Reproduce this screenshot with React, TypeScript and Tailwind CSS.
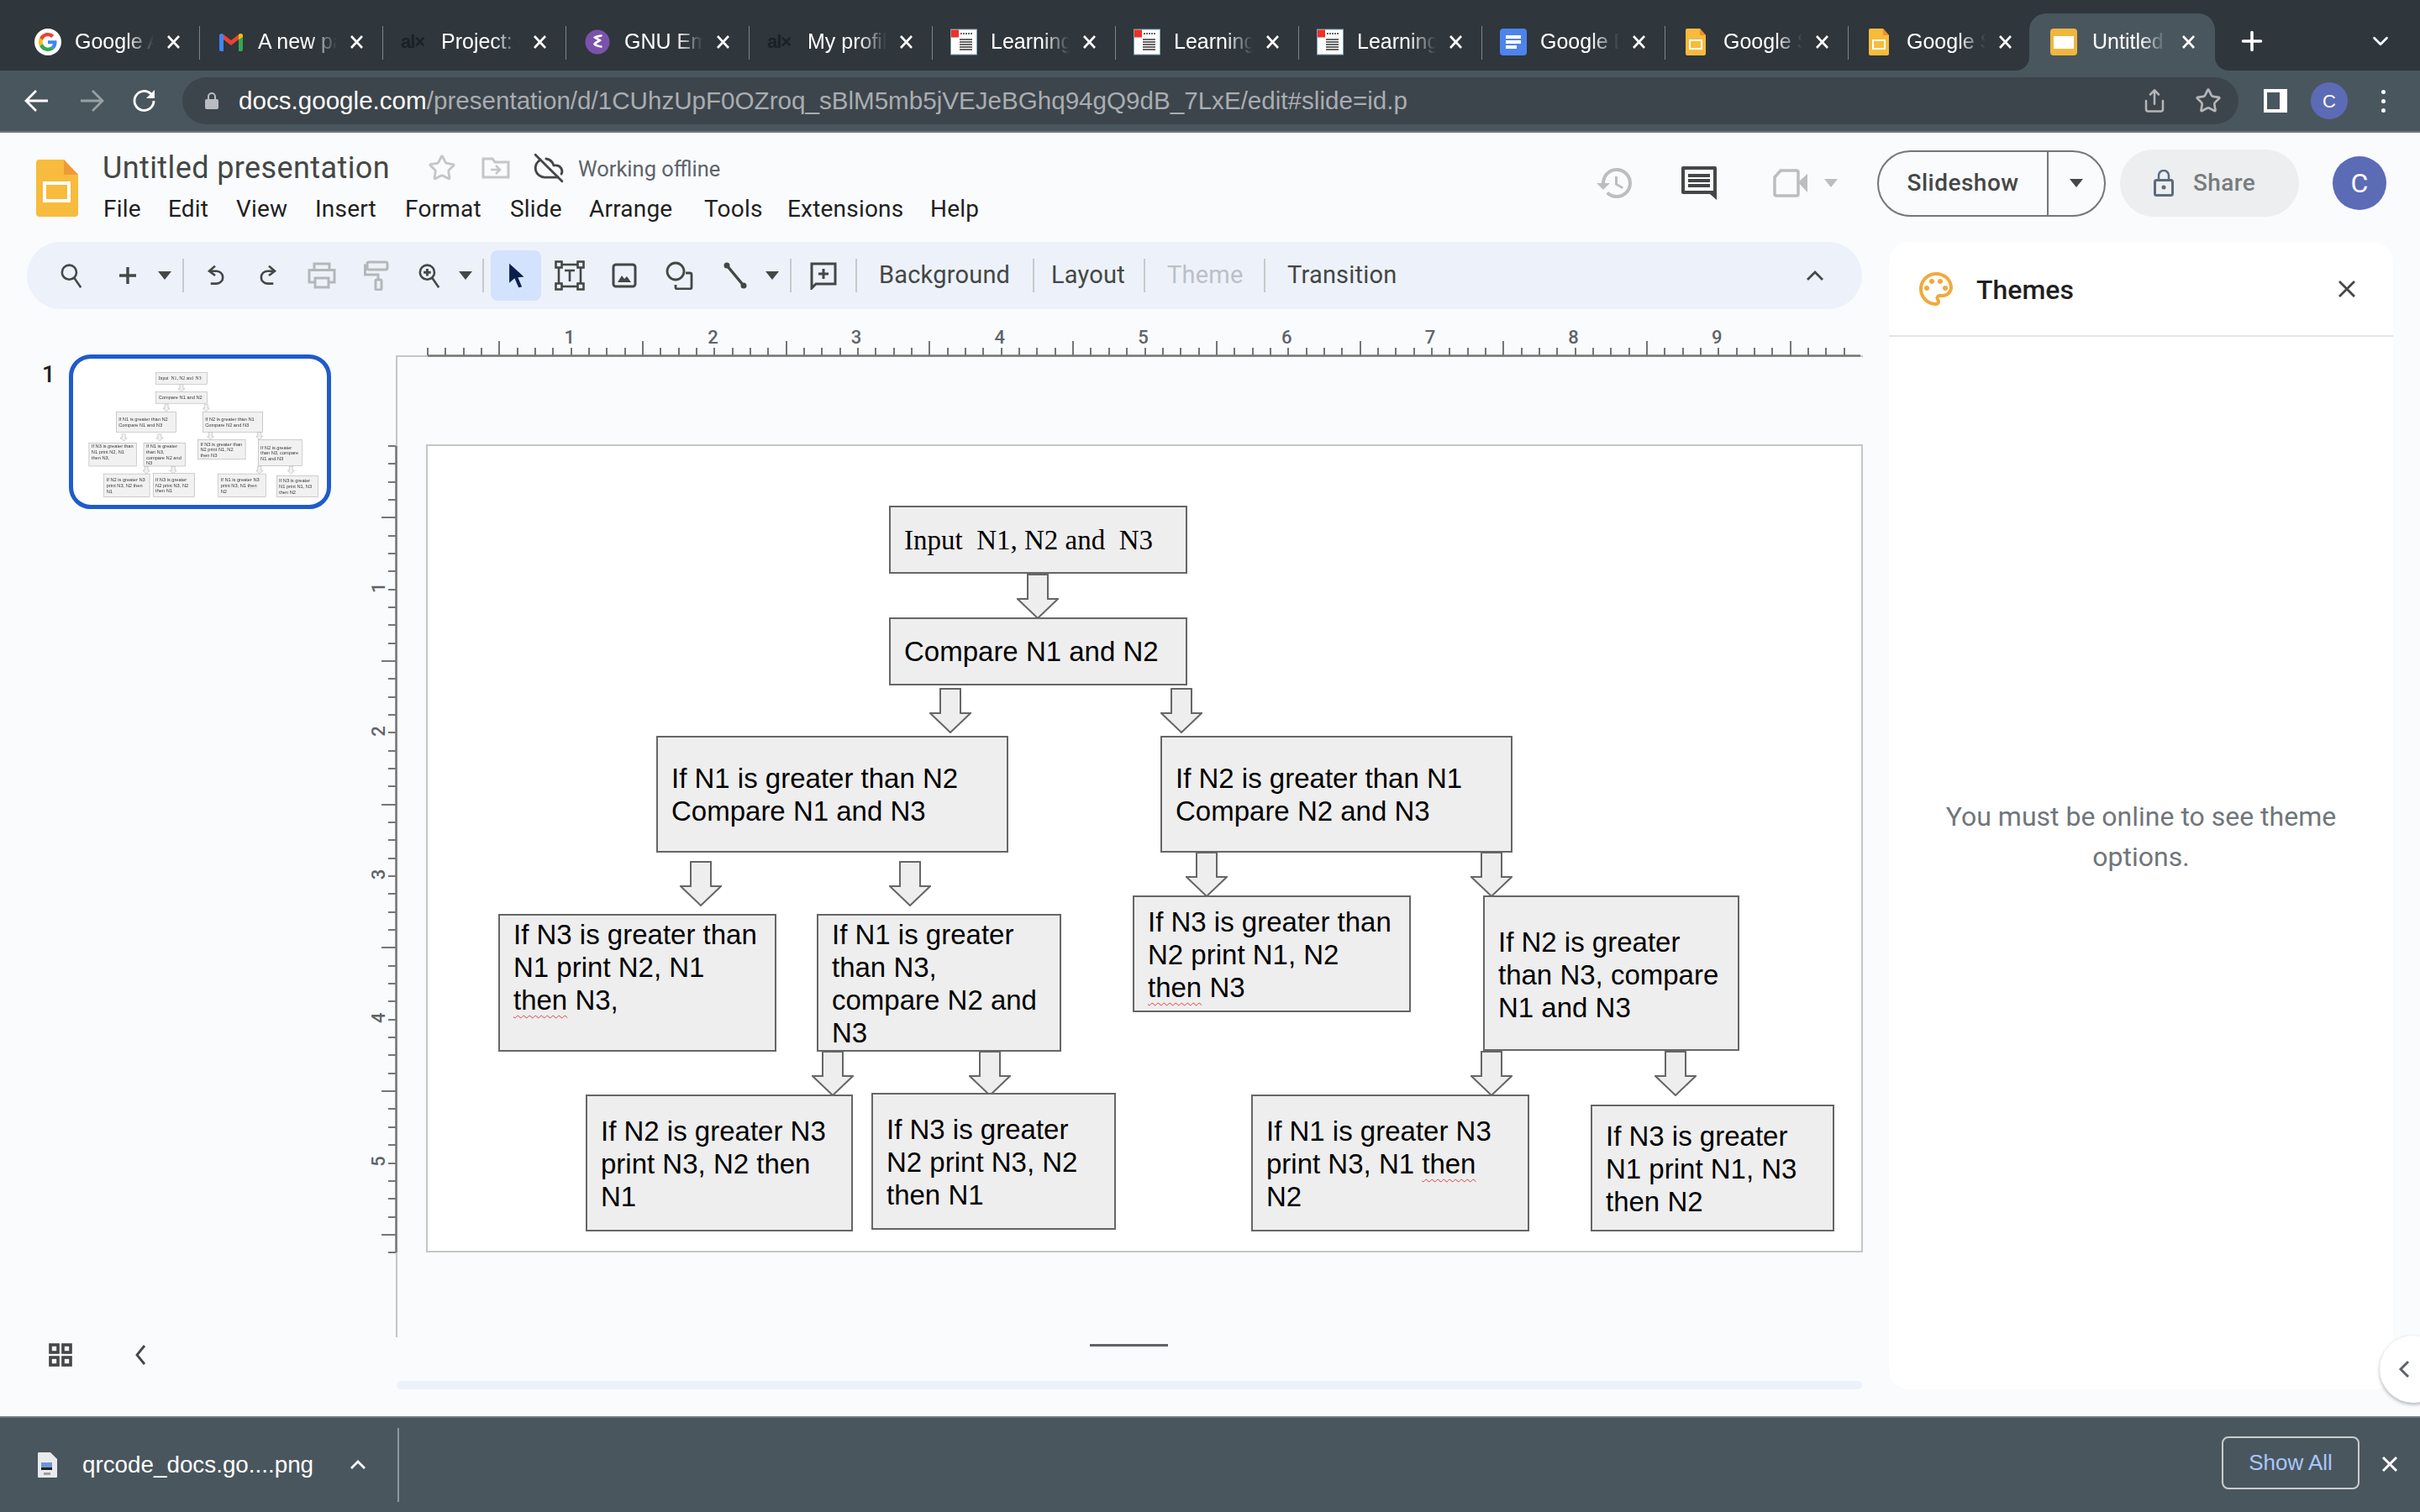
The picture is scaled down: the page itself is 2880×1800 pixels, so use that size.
import React from "react";
import { ChevronDown, CloudOff, Plus, Share, Star } from "lucide-react";

const ui = "font-['Roboto',sans-serif]";
const chrome = "font-['Liberation_Sans',sans-serif]";

function GoogleG() {
  return (
    <span className="w-8 h-8 rounded-full bg-white flex items-center justify-center">
      <svg width="22" height="22" viewBox="0 0 48 48">
        <path fill="#EA4335" d="M24 9.5c3.54 0 6.71 1.22 9.21 3.6l6.85-6.85C35.9 2.38 30.47 0 24 0 14.62 0 6.51 5.38 2.56 13.22l7.98 6.19C12.43 13.72 17.74 9.5 24 9.5z" />
        <path fill="#4285F4" d="M46.98 24.55c0-1.57-.15-3.09-.38-4.55H24v9.02h12.94c-.58 2.96-2.26 5.48-4.78 7.18l7.73 6c4.51-4.18 7.09-10.36 7.09-17.65z" />
        <path fill="#FBBC05" d="M10.53 28.59c-.48-1.45-.76-2.99-.76-4.59s.27-3.14.76-4.59l-7.98-6.19C.92 16.46 0 20.12 0 24c0 3.88.92 7.54 2.56 10.78l7.97-6.19z" />
        <path fill="#34A853" d="M24 48c6.48 0 11.93-2.13 15.89-5.81l-7.73-6c-2.15 1.45-4.92 2.3-8.16 2.3-6.26 0-11.57-4.22-13.47-9.91l-7.98 6.19C6.51 42.62 14.62 48 24 48z" />
      </svg>
    </span>
  );
}
function Gmail() {
  return (
    <svg width="32" height="32" viewBox="0 0 32 32">
      <path fill="#4285F4" d="M2 8.5C2 7 3 6 4.500 6c.8 0 1.500.4 2.500 1v20H4a2 2 0 0 1-2-2z" />
      <path fill="#34A853" d="M25 7c1-.6 1.700-1 2.500-1C29 6 30 7 30 8.500V25a2 2 0 0 1-2 2h-3z" />
      <path fill="#EA4335" d="M7 7l9 7 9-7v6l-9 7-9-7z" />
      <path fill="#FBBC05" d="M25 7c1-.6 1.700-1 2.500-1C29 6 30 7 30 8.500V10l-5 3z" />
    </svg>
  );
}
function Alx() {
  return <span className="w-8 text-[22px] leading-none font-bold font-['Liberation_Sans',sans-serif] text-[#1b2126] tracking-[-1px]">al×</span>;
}
function Emacs() {
  return (
    <svg width="32" height="32" viewBox="0 0 32 32">
      <circle cx="16" cy="16" r="14.500" fill="#7b52ab" />
      <path d="M20.500 8.500c-3 .5-6 1-7.500 2 1.500 1.500 5 2.500 6 3.500-2 1.500-5.500 2.500-6.500 4.500 1.500 2 5 2.500 8 3" fill="none" stroke="#fff" strokeWidth="2.600" strokeLinecap="round" />
    </svg>
  );
}
function Learning() {
  return (
    <svg width="32" height="32" viewBox="0 0 32 32">
      <rect x="0.500" y="1" width="31" height="30" fill="#fff" stroke="#7fa3b5" />
      <rect x="1" y="1.500" width="9" height="9" fill="#ee3124" />
      <path d="M12 6h14" stroke="#666" strokeWidth="2" strokeDasharray="2 1" />
      <path d="M11 13h15M11 16h15M11 19h15M11 22h15M11 25h15" stroke="#666" strokeWidth="2" />
    </svg>
  );
}
function DocsIcon() {
  return (
    <svg width="32" height="32" viewBox="0 0 32 32">
      <rect width="32" height="32" y="0" rx="4" fill="#4d84ec" />
      <path d="M7 8h18v4H7zM7 14h18v4H7zM7 20h13v4H7z" fill="#fff" />
    </svg>
  );
}
function SlidesSmall() {
  return (
    <svg width="32" height="32" viewBox="0 0 32 32">
      <path d="M5 0h15l7 8v22a2 2 0 0 1-2 2H5a2 2 0 0 1-2-2V2a2 2 0 0 1 2-2z" fill="#f7bb3d" />
      <path d="M20 0l7 8h-7z" fill="#ec8f2f" />
      <path d="M8 14h14v10H8z" fill="#f7bb3d" stroke="#fff" strokeWidth="2" />
    </svg>
  );
}
function SlidesActive() {
  return (
    <svg width="32" height="32" viewBox="0 0 32 32">
      <rect width="32" height="32" rx="4" fill="#efb73e" />
      <rect x="4" y="9" width="24" height="15" fill="#fff" />
    </svg>
  );
}
function TabX() {
  return (
    <svg width="17" height="16" viewBox="0 0 17 16" className="shrink-0">
      <path d="M2 1l13 14M15 1L2 15" stroke="#fff" strokeWidth="2.600" />
    </svg>
  );
}

const tabs: [React.ReactNode, string][] = [
  [<GoogleG />, "Google Accounts"],
  [<Gmail />, "A new password"],
  [<Alx />, "Project: 0x01"],
  [<Emacs />, "GNU Emacs"],
  [<Alx />, "My profile"],
  [<Learning />, "Learning Objects"],
  [<Learning />, "Learning Objects"],
  [<Learning />, "Learning Objects"],
  [<DocsIcon />, "Google Docs"],
  [<SlidesSmall />, "Google Slides"],
  [<SlidesSmall />, "Google Slides"],
];

function TabStrip() {
  return (
    <div className={`h-[84px] bg-[#2f363c] flex pl-[20px] shrink-0 ${chrome}`}>
      {tabs.map(([icon, title], i) => (
        <div key={i} className="w-[218px] h-[68px] mt-[16px] flex items-center pl-[21px] relative shrink-0">
          {icon}
          <span className="ml-[16px] w-[94px] overflow-hidden whitespace-nowrap text-[25px] text-white [mask-image:linear-gradient(90deg,#000_65%,transparent_100%)]">{title}</span>
          <span className="ml-[15px]"><TabX /></span>
          {i < 10 && <span className="absolute right-0 top-[15px] h-[40px] w-[1px] bg-[#7d858b]" />}
        </div>
      ))}
      <div className="-ml-[3px] w-[221px] h-[68px] mt-[16px] bg-[#4a565e] rounded-t-[20px] flex items-center pl-[25px] relative shrink-0">
        <SlidesActive />
        <span className="ml-[18px] w-[88px] overflow-hidden whitespace-nowrap text-[25px] text-white [mask-image:linear-gradient(90deg,#000_65%,transparent_100%)]">Untitled presentation</span>
        <span className="ml-[18px]"><TabX /></span>
        <span className="absolute -left-4 bottom-0 w-4 h-4 bg-[#4a565e]"><span className="block w-4 h-4 bg-[#2f363c] rounded-br-2xl" /></span>
        <span className="absolute -right-4 bottom-0 w-4 h-4 bg-[#4a565e]"><span className="block w-4 h-4 bg-[#2f363c] rounded-bl-2xl" /></span>
      </div>
      <Plus className="ml-[26px] mt-[31px] text-white" size={36} strokeWidth={2.400} />
      <ChevronDown className="ml-[120px] mt-[34px] text-white" size={30} strokeWidth={2.200} />
    </div>
  );
}

function UrlBar() {
  return (
    <div className={`h-[74px] bg-[#4a565e] border-b-2 border-[#6c7a7f] flex items-center shrink-0 ${chrome}`}>
      <svg width="32" height="32" viewBox="0 0 32 32" className="ml-[28px]"><path d="M29 16H4M15 4L3 16l12 12" fill="none" stroke="#fff" strokeWidth="2.800" /></svg>
      <svg width="32" height="32" viewBox="0 0 32 32" className="ml-[33px]"><path d="M3 16h25M17 4l12 12-12 12" fill="none" stroke="#98a0a5" strokeWidth="2.800" /></svg>
      <svg width="32" height="32" viewBox="0 0 32 32" className="ml-[31px]"><path d="M27 16a11.500 11.500 0 1 1-3.400-8.200" fill="none" stroke="#fff" strokeWidth="2.800" /><path d="M28 3v10H18z" fill="#fff" /></svg>
      <div className="ml-[29px] w-[2447px] h-[56px] bg-[#3d454c] rounded-full flex items-center">
        <svg width="18" height="22" viewBox="0 0 18 22" className="ml-[26px]"><path d="M5 9V6a4 4 0 0 1 8 0v3" fill="none" stroke="#b9bcc0" strokeWidth="2" /><rect x="1" y="9" width="16" height="12" rx="2" fill="#b9bcc0" /></svg>
        <span className="ml-[23px] text-[29.600px] whitespace-nowrap text-[#a9adb1]"><span className="text-white">docs.google.com</span>/presentation/d/1CUhzUpF0OZroq_sBlM5mb5jVEJeBGhq94gQ9dB_7LxE/edit#slide=id.p</span>
        <Share className="ml-auto text-[#b4b6b8]" size={30} strokeWidth={2} />
        <Star className="ml-[33px] mr-[20px] text-[#b4b6b8]" size={32} strokeWidth={2} />
      </div>
      <span className="ml-[30px] w-[28px] h-[28px] bg-[#4a565e] border-[4px] border-r-[9px] border-white" />
      <span className="ml-[28px] w-[44px] h-[44px] rounded-full bg-[#5c6bb5] text-white text-[22px] flex items-center justify-center">C</span>
      <span className="ml-[40px] flex flex-col gap-[6px]">
        <span className="w-[5px] h-[5px] rounded-full bg-white" />
        <span className="w-[5px] h-[5px] rounded-full bg-white" />
        <span className="w-[5px] h-[5px] rounded-full bg-white" />
      </span>
    </div>
  );
}

const menu: [string, string][] = [
  ["File", "w-[77px]"], ["Edit", "w-[81px]"], ["View", "w-[94px]"], ["Insert", "w-[107px]"], ["Format", "w-[125px]"],
  ["Slide", "w-[94px]"], ["Arrange", "w-[137px]"], ["Tools", "w-[99px]"], ["Extensions", "w-[170px]"], ["Help", "w-[60px]"],
];

function SlidesLogo() {
  return (
    <svg width="50" height="68" viewBox="0 0 50 68" className="mt-[32px] shrink-0">
      <path d="M4 0h29l17 18v46a4 4 0 0 1-4 4H4a4 4 0 0 1-4-4V4a4 4 0 0 1 4-4z" fill="#f7bb3d" />
      <path d="M33 0l17 18H33z" fill="#f19a35" />
      <rect x="10" y="28" width="29" height="21" fill="#f7bb3d" stroke="#fff" strokeWidth="4" />
    </svg>
  );
}

function Header() {
  return (
    <div className={`h-[130px] flex pl-[43px] pr-[40px] shrink-0 ${ui}`}>
      <SlidesLogo />
      <div className="ml-[29px]">
        <div className="mt-[20px] h-[44px] flex items-center">
          <span className="text-[36px] tracking-[0.4px] text-[#444746] whitespace-nowrap w-[342px]">Untitled presentation</span>
          <Star className="ml-[45px] text-[#c4c7c5]" size={34} strokeWidth={2} />
          <svg width="36" height="30" viewBox="0 0 36 30" className="ml-[29px]"><path d="M3 26V4h11l3 4h16v18z" fill="none" stroke="#c4c7c5" strokeWidth="3" /><path d="M12 17h11M18 12l5 5-5 5" fill="none" stroke="#c4c7c5" strokeWidth="2.500" /></svg>
          <CloudOff className="ml-[26px] text-[#444746]" size={38} strokeWidth={1.800} />
          <span className="ml-[16px] mt-[3px] text-[25.500px] text-[#5f6368] whitespace-nowrap">Working offline</span>
        </div>
        <div className="mt-[5px] ml-[1px] h-[44px] flex items-center">
          {menu.map(([m, w]) => (
            <span key={m} className={`${w} text-[28px] tracking-[0.2px] text-[#1f1f1f] whitespace-nowrap`}>{m}</span>
          ))}
        </div>
      </div>
      <div className="ml-auto mt-[20px] h-[80px] flex items-center">
        <svg width="48" height="48" viewBox="0 0 24 24" fill="#bdbdbd"><path d="M13 3a9 9 0 0 0-9 9H1l3.890 3.890.07.14L9 12H6c0-3.870 3.130-7 7-7s7 3.130 7 7-3.130 7-7 7c-1.930 0-3.680-.79-4.940-2.060l-1.420 1.420A8.954 8.954 0 0 0 13 21a9 9 0 0 0 0-18zm-1 5v5l4.280 2.540.72-1.210-3.500-2.080V8H12z" /></svg>
        <svg width="48" height="48" viewBox="0 0 48 48" className="ml-[52px]"><path d="M5 4h38a2 2 0 0 1 2 2v38l-8-7H5a2 2 0 0 1-2-2V6a2 2 0 0 1 2-2z" fill="#444746" /><rect x="7" y="8" width="34" height="25" fill="#f9fbfd" /><path d="M11 13h26v4H11zM11 19h26v4H11zM11 25h26v4H11z" fill="#444746" /></svg>
        <svg width="44" height="36" viewBox="0 0 44 36" className="ml-[63px]"><path d="M10 3h19a2 2 0 0 1 2 2v26a2 2 0 0 1-2 2H5a2 2 0 0 1-2-2V11z" fill="none" stroke="#bdbdbd" strokeWidth="3.500" /><path d="M31 17l11-10v22z" fill="#bdbdbd" /></svg>
        <svg width="16" height="10" viewBox="0 0 16 10" className="ml-[18px]"><path d="M0 0h16l-8 10z" fill="#bdbdbd" /></svg>
        <div className="ml-[47px] w-[272px] h-[79px] rounded-full border-2 border-[#747775] flex">
          <span className="w-[202px] border-r-2 border-[#747775] flex items-center justify-center text-[28px] font-medium tracking-[0.5px] text-[#444746]">Slideshow</span>
          <span className="flex-1 flex items-center justify-center"><svg width="16" height="10" viewBox="0 0 16 10"><path d="M0 0h16l-8 10z" fill="#444746" /></svg></span>
        </div>
        <div className="ml-[17px] w-[213px] h-[80px] rounded-full bg-[#eceef0] flex items-center pl-[40px]">
          <svg width="24" height="32" viewBox="0 0 24 32"><path d="M6 13V7a6 6 0 0 1 12 0v6" fill="none" stroke="#5c6b7f" strokeWidth="2.500" /><rect x="1.500" y="12.500" width="21" height="18" rx="2" fill="none" stroke="#5c6b7f" strokeWidth="3" /><circle cx="12" cy="21" r="2.500" fill="#5c6b7f" /></svg>
          <span className="ml-[23px] text-[28px] font-medium tracking-[0.4px] text-[#787c7e]">Share</span>
        </div>
        <span className="ml-[40px] w-[64px] h-[64px] rounded-full bg-[#5c6bb5] text-white text-[32px] flex items-center justify-center">C</span>
      </div>
    </div>
  );
}

function TBtn({ className = "", children }: { className?: string; children: React.ReactNode }) {
  return <span className={`w-[44px] h-[44px] flex items-center justify-center shrink-0 ${className}`}>{children}</span>;
}
function Caret({ className = "", color = "#444746" }: { className?: string; color?: string }) {
  return <svg width="16" height="10" viewBox="0 0 16 10" className={`shrink-0 ${className}`}><path d="M0 0h16l-8 10z" fill={color} /></svg>;
}
function Sep({ className = "" }: { className?: string }) {
  return <span className={`w-[2px] h-[40px] bg-[#c7c9cc] shrink-0 ${className}`} />;
}

function Toolbar() {
  const s = "#444746";
  const g = "#b4b7ba";
  const label = "text-[29px] tracking-[0.2px] whitespace-nowrap";
  return (
    <div className={`h-[80px] rounded-full bg-[#edf2fa] flex items-center shrink-0 ${ui}`}>
      <TBtn className="ml-[31px]"><svg width="28" height="31" viewBox="0 0 32 36"><circle cx="13" cy="13" r="10" fill="none" stroke={s} strokeWidth="3" /><path d="M20 21l9 13" stroke={s} strokeWidth="3" /></svg></TBtn>
      <TBtn className="ml-[23px]"><svg width="24" height="24" viewBox="0 0 24 24"><path d="M12 2v20M2 12h20" stroke={s} strokeWidth="3.400" /></svg></TBtn>
      <Caret className="ml-[14px]" />
      <Sep className="ml-[13px]" />
      <TBtn className="ml-[15px]"><svg width="24" height="28" viewBox="0 0 26 32"><path d="M13 3L5 10l8 6M5 10h10a8 8 0 0 1 0 17H7" fill="none" stroke={s} strokeWidth="3" /></svg></TBtn>
      <TBtn className="ml-[20px]"><svg width="24" height="28" viewBox="0 0 26 32"><path d="M13 3l8 7-8 6M21 10H11a8 8 0 0 0 0 17h8" fill="none" stroke={s} strokeWidth="3" /></svg></TBtn>
      <TBtn className="ml-[19px]"><svg width="34" height="32" viewBox="0 0 34 32"><path d="M8 9V2h18v7M8 24H2V9.500h30V24h-6" fill="none" stroke={g} strokeWidth="3" /><rect x="9" y="19" width="16" height="11" fill="none" stroke={g} strokeWidth="3" /></svg></TBtn>
      <TBtn className="ml-[21px]"><svg width="30" height="36" viewBox="0 0 30 36"><rect x="4" y="2" width="24" height="9" rx="2" fill="none" stroke={g} strokeWidth="3" /><path d="M4 6H1.500v11H17v6" fill="none" stroke={g} strokeWidth="3" /><rect x="14" y="23" width="7" height="12" rx="1.500" fill="none" stroke={g} strokeWidth="3" /></svg></TBtn>
      <TBtn className="ml-[19px]"><svg width="28" height="31" viewBox="0 0 32 36"><circle cx="13" cy="13" r="10" fill="none" stroke={s} strokeWidth="3" /><path d="M20 21l9 13" stroke={s} strokeWidth="3" /><path d="M13 8v10M8 13h10" stroke={s} strokeWidth="3.400" /></svg></TBtn>
      <Caret className="ml-[13px]" />
      <Sep className="ml-[12px]" />
      <span className="ml-[8px] w-[60px] h-[60px] rounded-[8px] bg-[#d3e3fd] flex items-center justify-center shrink-0">
        <svg width="22" height="30" viewBox="0 0 26 38"><path d="M3 1l22 20-9 1 6 14-5 1-6-14-8 7z" fill="#0b1f4a" /></svg>
      </span>
      <TBtn className="ml-[12px]"><svg width="36" height="36" viewBox="0 0 36 36"><rect x="5" y="5" width="26" height="26" fill="none" stroke={s} strokeWidth="2.600" /><g fill="#edf2fa" stroke={s} strokeWidth="2.600"><rect x="1.500" y="1.500" width="7" height="7" /><rect x="27.500" y="1.500" width="7" height="7" /><rect x="1.500" y="27.500" width="7" height="7" /><rect x="27.500" y="27.500" width="7" height="7" /></g><path d="M12 12h12M18 12v13" stroke={s} strokeWidth="2.600" /></svg></TBtn>
      <TBtn className="ml-[21px]"><svg width="30" height="30" viewBox="0 0 30 30"><rect x="2" y="2" width="26" height="26" rx="3" fill="none" stroke={s} strokeWidth="3" /><path d="M7 23l5-8 3 4 3-3 5 7z" fill={s} /></svg></TBtn>
      <TBtn className="ml-[22px]"><svg width="34" height="34" viewBox="0 0 34 34"><circle cx="12" cy="12" r="10" fill="none" stroke={s} strokeWidth="2.800" /><path d="M24 14h5a2 2 0 0 1 2 2v15a2 2 0 0 1-2 2H14a2 2 0 0 1-2-2v-3" fill="none" stroke={s} strokeWidth="2.800" /></svg></TBtn>
      <TBtn className="ml-[22px]"><svg width="30" height="32" viewBox="0 0 30 32"><path d="M5 4l20 24" stroke={s} strokeWidth="3.500" /><circle cx="5" cy="4" r="3.500" fill={s} /><circle cx="25" cy="28" r="3.500" fill={s} /></svg></TBtn>
      <Caret className="ml-[14px]" />
      <Sep className="ml-[13px]" />
      <TBtn className="ml-[16px]"><svg width="34" height="34" viewBox="0 0 34 34"><path d="M3 3h28v24H8l-5 5z" fill="none" stroke={s} strokeWidth="3" /><path d="M17 9v12M11 15h12" stroke={s} strokeWidth="3" /></svg></TBtn>
      <Sep className="ml-[16px]" />
      <span className={`ml-[26px] w-[157px] text-[#444746] ${label}`}>Background</span>
      <Sep className="ml-[26px]" />
      <span className={`ml-[20px] w-[88px] text-[#444746] ${label}`}>Layout</span>
      <Sep className="ml-[22px]" />
      <span className={`ml-[26px] w-[88px] text-[#bcc0c7] ${label}`}>Theme</span>
      <Sep className="ml-[27px]" />
      <span className={`ml-[26px] w-[127px] text-[#444746] ${label}`}>Transition</span>
      <svg width="22" height="14" viewBox="0 0 22 14" className="ml-auto mr-[45px]"><path d="M2 12l9-9 9 9" fill="none" stroke={s} strokeWidth="2.800" /></svg>
    </div>
  );
}

type NodeT = { box: string; lines: React.ReactNode[] };
const wavy = "underline decoration-wavy decoration-[#e53935] decoration-1 underline-offset-[6px] [text-decoration-skip-ink:none]";

const nodes: NodeT[] = [
  { box: "left-[86px] top-[559px] w-[331px] h-[164px] pt-[3px]", lines: ["If N3 is greater than", "N1 print N2, N1", <><span className={wavy}>then</span> N3,</>] },
  { box: "left-[465px] top-[559px] w-[291px] h-[164px] pt-[3px]", lines: ["If N1 is greater", "than N3,", "compare N2 and", "N3"] },
  { box: "left-[190px] top-[774px] w-[318px] h-[163px] pt-[22px]", lines: ["If N2 is greater N3", "print N3, N2 then", "N1"] },
  { box: "left-[530px] top-[772px] w-[291px] h-[163px] pt-[22px]", lines: ["If N3 is greater", "N2 print N3, N2", "then N1"] },
  { box: "left-[274px] top-[347px] w-[419px] h-[139px] pt-[29px]", lines: ["If N1 is greater than N2", "Compare N1 and N3"] },
  { box: "left-[874px] top-[347px] w-[419px] h-[139px] pt-[29px]", lines: ["If N2 is greater than N1", "Compare N2 and N3"] },
  { box: "left-[841px] top-[537px] w-[331px] h-[139px] pt-[10px]", lines: ["If N3 is greater than", "N2 print N1, N2", <><span className={wavy}>then</span> N3</>] },
  { box: "left-[1258px] top-[537px] w-[305px] h-[185px] pt-[34px]", lines: ["If N2 is greater", "than N3, compare", "N1 and N3"] },
  { box: "left-[982px] top-[774px] w-[331px] h-[163px] pt-[22px]", lines: ["If N1 is greater N3", <>print N3, N1 <span className={wavy}>then</span></>, "N2"] },
  { box: "left-[1386px] top-[786px] w-[290px] h-[151px] pt-[16px]", lines: ["If N3 is greater", "N1 print N1, N3", "then N2"] },
  { box: "left-[551px] top-[206px] w-[355px] h-[81px] flex flex-col justify-center", lines: ["Compare N1 and N2"] },
];

const arrows = [
  ["left-[703px] top-[154px]"], ["left-[599px] top-[290px]"], ["left-[874px] top-[290px]"],
  ["left-[302px] top-[496px]"], ["left-[551px] top-[496px]"], ["left-[904px] top-[485px]"],
  ["left-[1243px] top-[485px]"], ["left-[459px] top-[722px]"], ["left-[646px] top-[722px]"],
  ["left-[1243px] top-[722px]"], ["left-[1462px] top-[722px]"],
];

function Diagram() {
  return (
    <div className="relative w-[1710px] h-[962px] bg-white font-['Liberation_Sans',sans-serif] text-black">
      {arrows.map(([p], i) => (
        <svg key={i} width="50" height="54" viewBox="-1 -1 50 54" className={`absolute ${p}`}>
          <path d="M12 0h24v29h12L24 52 0 29h12z" fill="#eeeeee" stroke="#666666" strokeWidth="2" />
        </svg>
      ))}
      <div className="absolute left-[551px] top-[73px] w-[355px] h-[81px] bg-[#eeeeee] border-2 border-[#666666] pl-[16px] pt-[2px] flex items-center font-['Liberation_Serif',serif] text-[33px] whitespace-pre">Input  N1, N2 and  N3</div>
      {nodes.map((n, i) => (
        <div key={i} className={`absolute ${n.box} bg-[#eeeeee] border-2 border-[#666666] pl-[16px] text-[33px] leading-[39px] whitespace-nowrap`}>
          {n.lines.map((l, j) => <div key={j}>{l}</div>)}
        </div>
      ))}
    </div>
  );
}

function Filmstrip() {
  return (
    <div className={`w-[410px] shrink-0 flex flex-col justify-between pl-[20px] pt-[54px] pb-[27px] ${ui}`}>
      <div className="flex items-start">
        <span className="w-[30px] -ml-[2px] mr-[2px] mt-[3px] text-[27px] leading-[42px] font-medium text-[#1f1f1f]">1</span>
        <div className="w-[312px] h-[184px] border-[5px] border-[#1f5bcb] rounded-[26px] bg-white overflow-hidden">
          <div className="ml-[4px] mt-[4px] origin-top-left scale-[0.1717] w-[1710px] h-[962px] opacity-80"><Diagram /></div>
        </div>
      </div>
      <div className="flex items-center pl-[6px]">
        <svg width="28" height="28" viewBox="0 0 28 28"><g fill="none" stroke="#444746" strokeWidth="3.600"><rect x="2" y="2" width="9" height="9" /><rect x="17" y="2" width="9" height="9" /><rect x="2" y="17" width="9" height="9" /><rect x="17" y="17" width="9" height="9" /></g></svg>
        <svg width="14" height="26" viewBox="0 0 14 26" className="ml-[74px]"><path d="M12 2L3 13l9 11" fill="none" stroke="#444746" strokeWidth="2.800" /></svg>
      </div>
    </div>
  );
}

function Rulers() {
  const unit = 170.7 / 8;
  const h = Array.from({ length: 80 }, (_, i) => i);
  const v = Array.from({ length: 46 }, (_, i) => i);
  const c = "#747775";
  return (
    <svg width="1780" height="1130" viewBox="442 368 1780 1130" className="absolute left-0 top-0 pointer-events-none">
      <path d="M509 423.500H2214" stroke={c} strokeWidth="2.500" />
      <path d="M471.500 531V1491" stroke={c} strokeWidth="2.500" />
      {h.map((i) => {
        const x = Math.round(509 + i * unit);
        const half = i % 8 === 4;
        return <path key={i} d={`M${x} 423V${half ? 406 : 414}`} stroke={c} strokeWidth="2" />;
      })}
      {v.map((i) => {
        const y = Math.round(531 + i * unit);
        const half = i % 8 === 4;
        return <path key={i} d={`M471 ${y}H${half ? 454 : 462}`} stroke={c} strokeWidth="2" />;
      })}
      {[1, 2, 3, 4, 5, 6, 7, 8, 9].map((n) => (
        <text key={n} x={507 + n * 170.7} y={410} textAnchor="middle" fontSize="22" fill="#5f6368" fontFamily="Roboto, sans-serif" fontWeight="500" dy="-1">{n}</text>
      ))}
      {[1, 2, 3, 4, 5].map((n) => {
        const y = 529 + n * 170.7;
        return <text key={n} x={458} y={y} textAnchor="middle" fontSize="22" fill="#5f6368" fontFamily="Roboto, sans-serif" fontWeight="500" transform={`rotate(-90 458 ${y})`}>{n}</text>;
      })}
    </svg>
  );
}

function Editor() {
  return (
    <div className="relative flex-1 flex flex-col">
      <div className="h-[55px] shrink-0" />
      <div className="ml-[29px] h-[1169px] border-l-2 border-t-2 border-[#c4c7c5] pt-[104px] pl-[34px] shrink-0">
        <div className="relative w-[1710px] h-[962px]">
          <Diagram />
          <span className="absolute inset-0 border-2 border-[#c4c7c5] pointer-events-none" />
        </div>
      </div>
      <div className="flex-1 relative" />
      <div className="ml-[30px] h-[10px] w-[1744px] rounded-full bg-[#edf2fa] shrink-0" />
      <span className="absolute left-[855px] top-[1232px] w-[93px] h-[3px] bg-[#5f6368]" />
      <Rulers />
    </div>
  );
}

function ThemesPanel() {
  return (
    <div className={`w-[600px] h-[1366px] ml-[32px] rounded-[24px] bg-white flex flex-col shrink-0 ${ui}`}>
      <div className="h-[113px] border-b-2 border-[#e3e5e8] flex items-center pl-[32px] pr-[44px]">
        <svg width="48" height="48" viewBox="0 0 24 24" fill="#f3a93c">
          <path d="M12 22C6.490 22 2 17.510 2 12S6.490 2 12 2s10 4.040 10 9c0 3.310-2.690 6-6 6h-1.770c-.28 0-.5.22-.5.5 0 .12.05.23.13.33.41.47.64 1.060.64 1.670 0 1.380-1.120 2.500-2.500 2.500zm0-18c-4.410 0-8 3.590-8 8s3.590 8 8 8c.28 0 .5-.22.5-.5 0-.16-.08-.28-.14-.35-.41-.46-.63-1.050-.63-1.650 0-1.380 1.120-2.500 2.500-2.500H16c2.210 0 4-1.790 4-4 0-3.860-3.590-7-8-7z" />
          <circle cx="6.500" cy="11.500" r="1.500" /><circle cx="9.500" cy="7.500" r="1.500" /><circle cx="14.500" cy="7.500" r="1.500" /><circle cx="17.500" cy="11.500" r="1.500" />
        </svg>
        <span className="ml-[24px] mt-[2px] text-[32px] font-medium text-[#1f1f1f]">Themes</span>
        <svg width="22" height="22" viewBox="0 0 22 22" className="ml-auto"><path d="M2 2l18 18M20 2L2 20" stroke="#444746" strokeWidth="2.800" /></svg>
      </div>
      <div className="flex-1 flex flex-col items-center pt-[547px] text-[32px] leading-[48px] text-[#70757a]">
        <span>You must be online to see theme</span>
        <span>options.</span>
      </div>
    </div>
  );
}

function BottomBar() {
  return (
    <div className={`h-[114px] bg-[#4a565e] border-t-2 border-[#6c7a7f] flex items-center shrink-0 ${chrome}`}>
      <svg width="24" height="30" viewBox="0 0 24 30" className="ml-[44px]">
        <path d="M2 0h14l8 8v21a1 1 0 0 1-1 1H2a1 1 0 0 1-1-1V1a1 1 0 0 1 1-1z" fill="#e8eaec" />
        <rect x="5" y="12" width="13" height="6" fill="#6f95d8" /><rect x="5" y="18" width="13" height="3" fill="#222" /><rect x="8" y="24" width="8" height="3" fill="#9aa0a6" />
      </svg>
      <span className="ml-[30px] w-[274px] text-[27.800px] text-white whitespace-nowrap">qrcode_docs.go....png</span>
      <svg width="20" height="12" viewBox="0 0 20 12" className="ml-[44px]"><path d="M2 10l8-8 8 8" fill="none" stroke="#fff" strokeWidth="2.800" /></svg>
      <span className="ml-[37px] w-[2px] h-[88px] bg-[#8d979e]" />
      <span className="ml-auto mb-[5px] w-[164px] h-[63px] rounded-[8px] border-2 border-[#c8ccce] flex items-center justify-center text-[26px] font-medium text-[#a8c7fa]">Show All</span>
      <svg width="20" height="20" viewBox="0 0 20 20" className="ml-[26px] mr-[26px] mb-[3px]"><path d="M2 2l16 16M18 2L2 18" stroke="#fff" strokeWidth="3" /></svg>
    </div>
  );
}

export default function App() {
  return (
    <div className="relative w-[2880px] h-[1800px] bg-[#f9fbfd] flex flex-col overflow-hidden">
      <TabStrip />
      <UrlBar />
      <Header />
      <div className="flex-1 flex pl-[32px] min-h-0">
        <div className="w-[2184px] shrink-0 flex flex-col">
          <Toolbar />
          <div className="h-[1286px] flex">
            <Filmstrip />
            <Editor />
          </div>
        </div>
        <ThemesPanel />
      </div>
      <BottomBar />
      <span className="absolute left-[2832px] top-[1590px] w-[80px] h-[80px] rounded-full bg-white shadow-[0_2px_4px_rgba(0,0,0,0.3)] flex items-center pl-[22px]">
        <svg width="14" height="22" viewBox="0 0 14 22"><path d="M12 2L3 11l9 9" fill="none" stroke="#5f6368" strokeWidth="3" /></svg>
      </span>
    </div>
  );
}
